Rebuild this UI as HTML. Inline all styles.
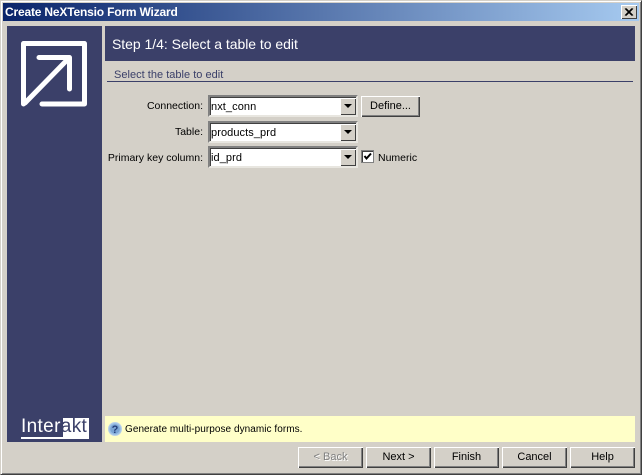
<!DOCTYPE html>
<html><head><meta charset="utf-8"><style>
html,body{margin:0;padding:0}
body{width:642px;height:475px;position:relative;overflow:hidden;background:#d4d0c8;font-family:"Liberation Sans",sans-serif;font-size:11px;color:#000}
div,span{position:absolute;box-sizing:border-box;white-space:nowrap}
.win{left:0;top:0;width:642px;height:475px;border:1px solid;border-color:#d4d0c8 #404040 #404040 #d4d0c8;box-shadow:inset 1px 1px 0 #fff,inset -1px -1px 0 #808080}
.title{left:3px;top:3px;width:636px;height:18px;background:linear-gradient(90deg,#0a246a,#a6caf0);color:#fff;font:bold 12px "Liberation Sans",sans-serif;line-height:18px;padding-left:2px;letter-spacing:-.18px}
.close{left:621px;top:5px;width:16px;height:14px;background:#d4d0c8;box-shadow:inset 1px 1px 0 #fff,inset -1px -1px 0 #404040}
.side{left:7px;top:26px;width:95px;height:416px;background:#3b4069}
.head{left:105px;top:26px;width:530px;height:35px;background:#3b4069;color:#fff;font:14px "Liberation Sans",sans-serif;line-height:36px;padding-left:7px;letter-spacing:-.03px}
.sub{left:114px;top:69px;color:#3b4069;line-height:13px;letter-spacing:.02px}
.rule{left:107px;top:81px;width:526px;height:1px;background:#3b4069}
.lab{right:439px;line-height:14px;font-size:10.5px}
.combo{left:208px;width:150px;height:22px;background:#fff;border:2px solid;border-color:#808080 #e8e6e0 #e8e6e0 #808080;box-shadow:inset 1px 1px 0 #404040}
.combo span.t{left:1px;top:3px;line-height:14px;letter-spacing:.08px}
.arr{right:0;top:1px;width:16px;height:17px;background:#d4d0c8;box-shadow:inset 1px 1px 0 #fff,inset -1px -1px 0 #404040}
.arr:after{content:"";position:absolute;left:4px;top:6px;border:4px solid transparent;border-top:4px solid #000;border-bottom:0}
.btn{height:21px;background:#d4d0c8;box-shadow:inset 1px 1px 0 #fff,inset -1px -1px 0 #404040,inset -2px -2px 0 #808080;text-align:center;line-height:21px}
.dis{color:#808080;text-shadow:1px 1px 0 #fff}
.tip{left:105px;top:416px;width:530px;height:26px;background:#ffffc8}
</style></head><body>
<div class="win"></div>
<div class="title">Create NeXTensio Form Wizard</div>
<div class="close"><svg width="16" height="14" style="position:absolute;left:0;top:0"><path d="M4 3.5L11 10.5M5 3.5L12 10.5M11 3.5L4 10.5M12 3.5L5 10.5" stroke="#000" stroke-width="1" fill="none"/></svg></div>
<div class="side">
<svg width="95" height="100" style="position:absolute;left:0;top:0">
<path d="M16.5 78V17.5H77.5V78H35" fill="none" stroke="#fff" stroke-width="5" stroke-linecap="round" stroke-linejoin="round"/>
<path d="M18 77L62 32M32 31.5H62.5V63" fill="none" stroke="#fff" stroke-width="5" stroke-linecap="round" stroke-linejoin="round"/>
</svg>
<div style="left:56px;top:392px;width:26px;height:19px;background:#fff"></div>
<div style="left:14px;top:392px;font:19px 'Liberation Sans',sans-serif;line-height:18px;color:#fff;letter-spacing:.35px">Inter<span style="position:static;color:#3b4069">akt</span></div>
<div style="left:14px;top:411px;width:68px;height:2px;background:#fff"></div>
</div>
<div class="head">Step 1/4: Select a table to edit</div>
<div class="sub">Select the table to edit</div>
<div class="rule"></div>
<div class="lab" style="top:99px">Connection:</div>
<div class="combo" style="top:95px"><span class="t">nxt_conn</span><div class="arr"></div></div>
<div class="btn" style="left:361px;top:96px;width:59px">Define...</div>
<div class="lab" style="top:125px">Table:</div>
<div class="combo" style="top:121px"><span class="t">products_prd</span><div class="arr"></div></div>
<div class="lab" style="top:151px">Primary key column:</div>
<div class="combo" style="top:146px"><span class="t">id_prd</span><div class="arr"></div></div>
<div style="left:361px;top:150px;width:13px;height:13px;background:#fff;border:1px solid #808080;box-shadow:inset 1px 1px 0 #404040"><svg width="11" height="11" style="position:absolute;left:0;top:0"><path d="M2.5 5L4.5 7.5L9 2.5" fill="none" stroke="#000" stroke-width="2"/></svg></div>
<div style="left:378px;top:151px;line-height:14px;font-size:10.5px">Numeric</div>
<div class="tip">
<svg width="14" height="14" style="position:absolute;left:3px;top:6px"><circle cx="7" cy="7" r="6.5" fill="#9cc0e4" stroke="#b8d0ea"/><circle cx="7" cy="7" r="4.8" fill="#7aa4d4"/><text x="7" y="11" font-size="11" font-weight="bold" text-anchor="middle" fill="#243f7a" font-family="Liberation Sans">?</text></svg>
<span style="left:20px;top:7px;line-height:14px;font-size:10px;letter-spacing:.05px">Generate multi-purpose dynamic forms.</span>
</div>
<div class="btn dis" style="left:298px;top:447px;width:65px">&lt; Back</div>
<div class="btn" style="left:366px;top:447px;width:65px">Next &gt;</div>
<div class="btn" style="left:434px;top:447px;width:65px">Finish</div>
<div class="btn" style="left:502px;top:447px;width:65px">Cancel</div>
<div class="btn" style="left:570px;top:447px;width:65px">Help</div>
</body></html>
